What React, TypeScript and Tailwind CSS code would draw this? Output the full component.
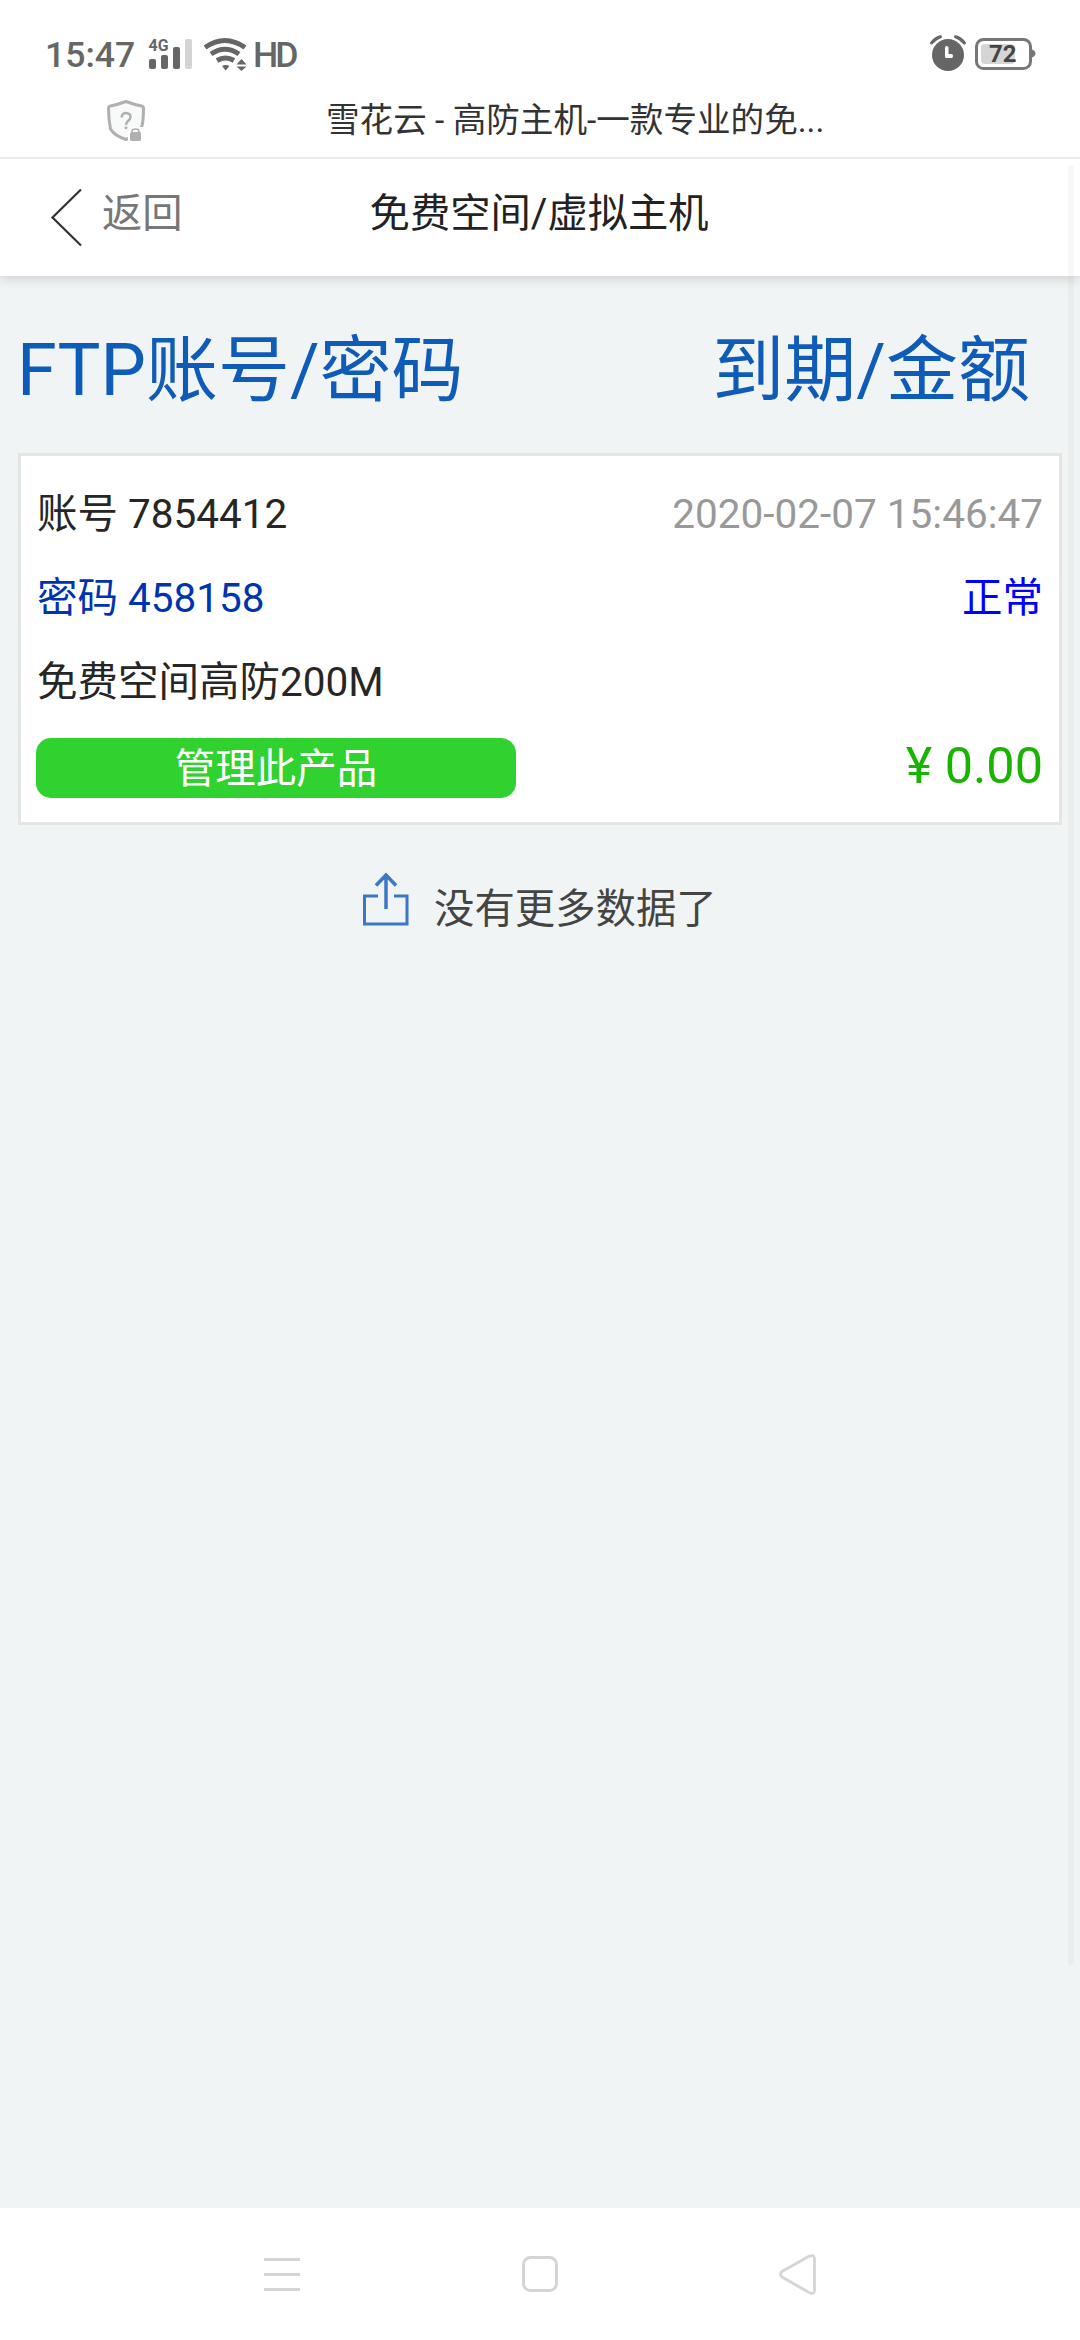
import React from 'react';

const SignalIcon: React.FC = () => (
  <svg width="46" height="40" viewBox="147 30 46 40" className="mb-[7px] shrink-0">
    <text x="148.5" y="51" fontSize="17" fontWeight="700" fontFamily="Roboto" textLength="20" lengthAdjust="spacingAndGlyphs" fill="#666">
      4G
    </text>
    <g fill="#666">
      <rect x="149" y="59" width="7" height="10" rx="2" />
      <rect x="161" y="55" width="7" height="14" rx="2" />
      <rect x="173" y="47" width="7" height="22" rx="2" />
    </g>
    <rect x="185" y="39" width="7" height="30" rx="2" fill="#d4d4d4" />
  </svg>
);

const WifiIcon: React.FC = () => (
  <svg width="43" height="34" viewBox="204 37 43 34" className="mb-[6px] shrink-0">
    <g fill="none" stroke="#666" strokeWidth="5">
      <path d="M205 47.5Q225 33.5 245 47.5" />
      <path d="M211 54Q225 44.5 239 54" />
      <path d="M217 60.5Q225.500 55.500 234 60.5" />
    </g>
    <path d="M222 66Q225.500 64 229.500 66L225.700 70.500Z" fill="#666" />
    <path d="M241.500 57L249 65.500H234Z" fill="#fff" />
    <path d="M236.500 64.500L241.500 59L246.500 64.500ZM236.500 66.500H246.500L241.500 71Z" fill="#666" />
  </svg>
);

const AlarmIcon: React.FC = () => (
  <svg width="38" height="38" viewBox="929 34 38 38" className="mb-[5px] shrink-0">
    <circle cx="948" cy="55" r="16" fill="#666" />
    <g fill="none" strokeLinecap="round">
      <path d="M931.500 43Q935 38.500 940.500 36.800M964.500 43Q961 38.500 955.500 36.800" stroke="#666" strokeWidth="3" />
    </g>
    <path d="M945 47.500Q945 46 946.700 46Q948.500 46 948.500 47.500V54H951.500Q953 54 953 56Q953 58 951.500 58H946.500Q945 58 945 56.500Z" fill="#fff" />
  </svg>
);

const BatteryIcon: React.FC = () => (
  <svg width="61" height="34" viewBox="975 37 61 34" className="mb-[6px] shrink-0">
    <rect x="976.500" y="39.500" width="54" height="29" rx="7" fill="none" stroke="#777" strokeWidth="3" />
    <path d="M1032 49.500Q1035.500 51 1035.500 53.500Q1035.500 56 1032 57.500Z" fill="#777" />
    <rect x="981" y="44" width="34" height="20" rx="4" fill="#d5d5d5" />
    <text x="989" y="62" fontSize="24" fontWeight="700" fontFamily="Roboto" textLength="27.500" fill="#444">
      72
    </text>
  </svg>
);

const ShieldIcon: React.FC = () => (
  <svg width="40" height="43" viewBox="106 99 40 43" className="shrink-0">
    <path
      d="M126 101.500Q134 104.500 141.500 106Q143.500 106.500 143.500 108.500Q143.500 119 142 126Q138 135 126 139.500Q114 135.500 110.500 129Q108.500 119 108.500 108.500Q108.500 106.500 110.500 106Q118 104.500 126 101.500Z"
      fill="#f8fafa"
      stroke="#b0b0b0"
      strokeWidth="3"
    />
    <path d="M121.500 117.500Q122 113 126 113Q130.500 113.300 130.500 117Q130.500 119 128 121Q126 122.800 126 125" fill="none" stroke="#b0b0b0" strokeWidth="2.500" />
    <circle cx="126" cy="127.700" r="1.500" fill="#b0b0b0" />
    <path d="M128 142V132L131 127H146V142Z" fill="#fff" />
    <rect x="130" y="132" width="11" height="9" rx="1.500" fill="#b0b0b0" />
    <path d="M132 133V131.500Q132 129 135.500 129Q139 129 139 131.500V133" fill="none" stroke="#b0b0b0" strokeWidth="1.600" />
  </svg>
);

const ShareIcon: React.FC = () => (
  <svg width="47" height="54" viewBox="362 872 47 54" className="shrink-0">
    <g fill="none" stroke="#3878c4" strokeWidth="3">
      <path d="M378 896H364.500V924H407V896H394" />
      <path d="M386 909V875M376 885.500L386 875L396 885.500" strokeWidth="3.500" />
    </g>
  </svg>
);

const StatusBar: React.FC = () => (
  <div className="flex h-[78px] items-end pr-[44px] pb-px pl-[45px] text-[#666]">
    <span className="w-[102px] text-[35.6px] leading-[43px] font-medium">15:47</span>
    <SignalIcon />
    <span className="w-[11px]" />
    <WifiIcon />
    <span className="ml-[6px] text-[35.6px] leading-[44px] font-medium tracking-[-3px]">HD</span>
    <span className="ml-auto flex items-end gap-2">
      <AlarmIcon />
      <BatteryIcon />
    </span>
  </div>
);

const TitleBar: React.FC = () => (
  <div className="relative z-10 flex h-[81px] border-b-2 border-[#ebebeb] bg-white pt-[21px] pl-[106px] text-[#333]">
    <ShieldIcon />
    <span className="ml-[180px] pt-px text-[33.6px] leading-[42px] whitespace-nowrap">雪花云 - 高防主机-一款专业的免...</span>
  </div>
);

const PageHeader: React.FC = () => (
  <header className="relative flex h-[117px] bg-white pt-[30px] pl-[50px] shadow-[0_2px_12px_rgba(0,0,0,0.16)]">
    <svg width="32" height="60" viewBox="50 189 32 60" className="shrink-0">
      <path d="M81 189.500L52.500 217.500L81 245.500" fill="none" stroke="#333" strokeWidth="2.200" />
    </svg>
    <span className="ml-[20px] pt-px text-[40.3px] leading-[48px] text-[#777]">返回</span>
    <h1 className="ml-[187px] pt-px text-[40.3px] leading-[48px] text-[#222]">免费空间/虚拟主机</h1>
  </header>
);

const ProductCard: React.FC = () => (
  <section className="mx-[18px] border-3 border-[#e4e6e6] bg-white px-[16px] pt-[16px] pb-[14px] text-[40.5px] leading-[84px] text-[#262626]">
    <div className="flex justify-between">
      <span>账号 7854412</span>
      <span className="text-[#999]">2020-02-07 15:46:47</span>
    </div>
    <div className="flex justify-between">
      <span className="text-[#0033b0]">密码 458158</span>
      <span className="text-[#0000ff]">正常</span>
    </div>
    <div>免费空间高防200M</div>
    <div className="flex h-[84px] justify-between">
      <button className="-ml-px mt-[14px] h-[60px] w-[480px] rounded-[15px] bg-[#2fd22f] pt-[2px] leading-[58px] text-white">
        管理此产品
      </button>
      <span className="text-[50.4px] text-[#18b400]">¥ 0.00</span>
    </div>
  </section>
);

const NavBar: React.FC = () => (
  <nav className="flex h-[132px] items-center justify-between bg-white px-[262px]">
    <svg width="40" height="44" viewBox="262 2252 40 44">
      <path d="M264 2259.500H300M264 2274.500H300M264 2289.500H300" stroke="#d5d5d5" strokeWidth="3" />
    </svg>
    <svg width="40" height="44" viewBox="520 2252 40 44">
      <rect x="523.500" y="2257.500" width="33" height="33" rx="7" fill="none" stroke="#d5d5d5" strokeWidth="3" />
    </svg>
    <svg width="40" height="44" viewBox="776 2252 40 44">
      <path
        d="M780 2271.500L807 2256.300Q812.500 2254 812.500 2259V2290Q812.500 2295 807 2292.500L780 2277Q777 2274.300 780 2271.500Z"
        fill="none"
        stroke="#d5d5d5"
        strokeWidth="2.800"
      />
    </svg>
  </nav>
);

export const App: React.FC = () => {
  return (
    <div className="relative flex h-[2340px] w-[1080px] flex-col overflow-hidden bg-white font-['Roboto','Noto_Sans_CJK_SC',sans-serif]">
      <StatusBar />
      <TitleBar />
      <PageHeader />

      <main className="flex-1 bg-[#f0f4f5]">
        {/* Column titles */}
        <div className="flex h-[177px] justify-between pt-[13px] pr-[50px] pl-[17px] text-[72px] leading-[164px] text-[#0f5cb8]">
          <span>FTP账号/密码</span>
          <span>到期/金额</span>
        </div>

        <ProductCard />

        {/* End of list */}
        <div className="flex pt-[47px] pl-[362px] text-[#444]">
          <ShareIcon />
          <span className="ml-[25px] pt-[11px] text-[40.4px] leading-[54px]">没有更多数据了</span>
        </div>
      </main>

      <NavBar />

      {/* Scrollbar thumb */}
      <div className="absolute top-[165px] right-[6px] z-20 h-[1800px] w-[6px] rounded-full bg-[#505020]/4" />
    </div>
  );
};

export default App;
